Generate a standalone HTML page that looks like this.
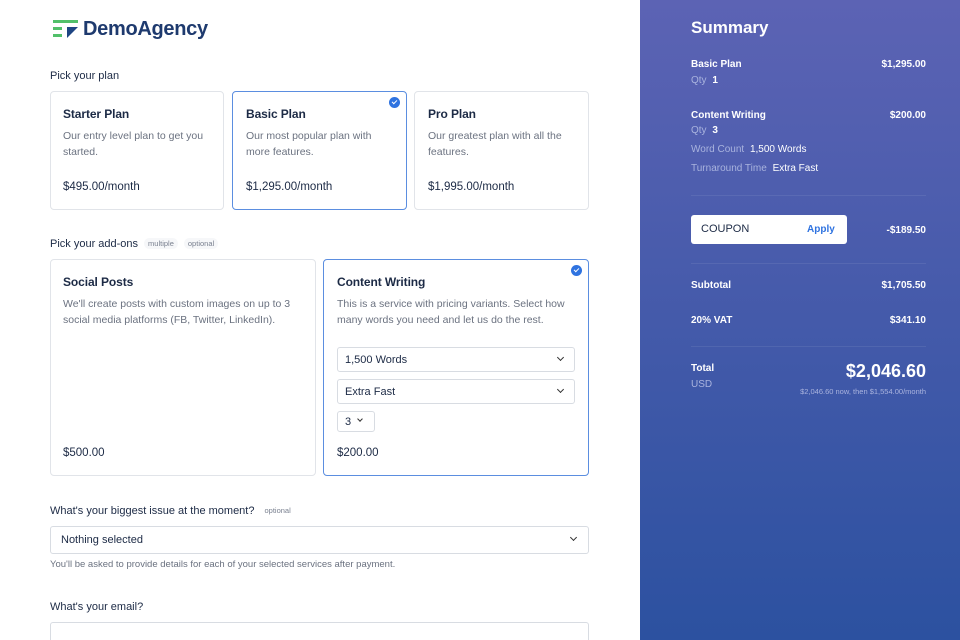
<!DOCTYPE html>
<html style="width:960px;height:640px;overflow:hidden"><head><meta charset="utf-8"><style>
*{box-sizing:border-box;margin:0;padding:0}
body{width:960px;height:640px;overflow:hidden;font-family:"Liberation Sans",Arial,sans-serif;background:#fff;position:relative;color:#1c2a45}
.a{position:absolute}
.card{position:absolute;border:1px solid #e1e4e9;border-radius:4px;background:#fff}
.card.sel{border:1px solid #5b8ee0}
.t{position:absolute;font-size:12px;color:#1c2a45;font-weight:bold;letter-spacing:-0.1px}
.d{position:absolute;font-family:"Liberation Sans",Arial,sans-serif;font-size:10.5px;color:#6b7280;line-height:16px}
.p{position:absolute;font-size:11.5px;color:#1c2a45}
.chk{position:absolute;width:11px;height:11px;border-radius:50%;background:#2f73e0}
.chk:after{content:"";position:absolute;left:3px;top:3px;width:4px;height:2px;border-left:1.3px solid #fff;border-bottom:1.3px solid #fff;transform:rotate(-45deg)}
.lbl{position:absolute;font-size:11px;color:#1c2a45}
.tag{font-size:7.5px;color:#7a8190;background:#f6f7f9;border-radius:6px;padding:1px 4px;margin-left:6px;vertical-align:1px}
.sel-box{position:absolute;border:1px solid #d8dce2;border-radius:3px;background:#fff;font-size:11px;color:#1c2a45;padding-left:7px}
.car{position:absolute;width:5px;height:5px;border-right:1.3px solid #333;border-bottom:1.3px solid #333;transform:rotate(45deg)}
.side{position:absolute;left:640px;top:0;width:320px;height:640px;background:linear-gradient(#5c63b4,#2c51a0)}
.w{position:absolute;color:#fff;font-size:10px;font-weight:bold}
.m{position:absolute;color:#a9b3de;font-size:10px}
.hr{position:absolute;left:51px;width:235px;height:1px;background:rgba(255,255,255,0.08)}
</style></head><body>
<svg class="a" style="left:53px;top:20px" width="26" height="18"><rect x="0" y="0" width="25" height="3" fill="#52c06a"/><rect x="0" y="7" width="9" height="3" fill="#52c06a"/><rect x="0" y="14" width="9" height="3" fill="#52c06a"/><polygon points="14,7 25,7 14,18" fill="#1e4583"/></svg>
<div class="a" style="left:83px;top:18px;font-size:20px;font-weight:bold;color:#1e3a6e;letter-spacing:-0.3px">DemoAgency</div>

<div class="lbl" style="left:50px;top:70px">Pick your plan</div>
<div class="card" style="left:50px;top:91px;width:174px;height:119px"></div>
<div class="t" style="left:63px;top:107px">Starter Plan</div>
<div class="d" style="left:63px;top:128px;width:155px">Our entry level plan to get you started.</div>
<div class="p" style="left:63px;top:181px">$495.00/month</div>
<div class="card sel" style="left:232px;top:91px;width:175px;height:119px"></div>
<div class="chk" style="left:389px;top:97px"></div>
<div class="t" style="left:246px;top:107px">Basic Plan</div>
<div class="d" style="left:246px;top:128px;width:140px">Our most popular plan with more features.</div>
<div class="p" style="left:246px;top:181px">$1,295.00/month</div>
<div class="card" style="left:414px;top:91px;width:175px;height:119px"></div>
<div class="t" style="left:428px;top:107px">Pro Plan</div>
<div class="d" style="left:428px;top:128px;width:150px">Our greatest plan with all the features.</div>
<div class="p" style="left:428px;top:181px">$1,995.00/month</div>

<div class="lbl" style="left:50px;top:238px">Pick your add-ons<span class="tag">multiple</span><span class="tag">optional</span></div>
<div class="card" style="left:50px;top:259px;width:266px;height:217px"></div>
<div class="t" style="left:63px;top:275px">Social Posts</div>
<div class="d" style="left:63px;top:296px;width:240px">We'll create posts with custom images on up to 3 social media platforms (FB, Twitter, LinkedIn).</div>
<div class="p" style="left:63px;top:447px">$500.00</div>
<div class="card sel" style="left:323px;top:259px;width:266px;height:217px"></div>
<div class="chk" style="left:571px;top:265px"></div>
<div class="t" style="left:337px;top:275px">Content Writing</div>
<div class="d" style="left:337px;top:296px;width:245px">This is a service with pricing variants. Select how many words you need and let us do the rest.</div>
<div class="sel-box" style="left:337px;top:347px;width:238px;height:25px;line-height:24px">1,500 Words</div><div class="car" style="left:558px;top:355px"></div>
<div class="sel-box" style="left:337px;top:379px;width:238px;height:25px;line-height:24px">Extra Fast</div><div class="car" style="left:558px;top:387px"></div>
<div class="sel-box" style="left:337px;top:411px;width:38px;height:21px;line-height:20px">3</div><div class="car" style="left:358px;top:417px;width:4px;height:4px"></div>
<div class="p" style="left:337px;top:447px">$200.00</div>

<div class="lbl" style="left:50px;top:505px">What's your biggest issue at the moment?<span class="tag" style="background:none">optional</span></div>
<div class="sel-box" style="left:50px;top:526px;width:539px;height:28px;line-height:27px;padding-left:10px">Nothing selected</div><div class="car" style="left:571px;top:535px"></div>
<div class="d" style="left:50px;top:557px;font-size:9.5px">You'll be asked to provide details for each of your selected services after payment.</div>
<div class="lbl" style="left:50px;top:601px">What's your email?</div>
<div class="sel-box" style="left:50px;top:622px;width:539px;height:24px"></div>

<div class="side">
<div class="w" style="left:51px;top:18px;font-size:17px">Summary</div>
<div class="w" style="left:51px;top:59px">Basic Plan</div><div class="w" style="right:34px;top:59px">$1,295.00</div>
<div class="m" style="left:51px;top:75px">Qty <b style="color:#fff;margin-left:3px">1</b></div>
<div class="w" style="left:51px;top:110px">Content Writing</div><div class="w" style="right:34px;top:110px">$200.00</div>
<div class="m" style="left:51px;top:125px">Qty <b style="color:#fff;margin-left:3px">3</b></div>
<div class="m" style="left:51px;top:144px">Word Count <span style="color:#fff;margin-left:3px">1,500 Words</span></div>
<div class="m" style="left:51px;top:163px">Turnaround Time <span style="color:#fff;margin-left:3px">Extra Fast</span></div>
<div class="hr" style="top:195px"></div>
<div class="a" style="left:51px;top:215px;width:156px;height:29px;background:#fff;border-radius:3px"><span class="a" style="left:10px;top:8px;font-size:11px;color:#1c2a45">COUPON</span><span class="a" style="left:116px;top:9px;font-size:10px;color:#2f73e0;font-weight:bold">Apply</span></div>
<div class="w" style="right:34px;top:225px">-$189.50</div>
<div class="hr" style="top:263px"></div>
<div class="w" style="left:51px;top:280px">Subtotal</div><div class="w" style="right:34px;top:280px">$1,705.50</div>
<div class="w" style="left:51px;top:315px">20% VAT</div><div class="w" style="right:34px;top:315px">$341.10</div>
<div class="hr" style="top:346px"></div>
<div class="w" style="left:51px;top:363px">Total</div>
<div class="m" style="left:51px;top:379px">USD</div>
<div class="w" style="right:34px;top:361px;font-size:18px">$2,046.60</div>
<div class="m" style="right:34px;top:387px;font-size:7.5px">$2,046.60 now, then $1,554.00/month</div>
</div>
</body></html>
